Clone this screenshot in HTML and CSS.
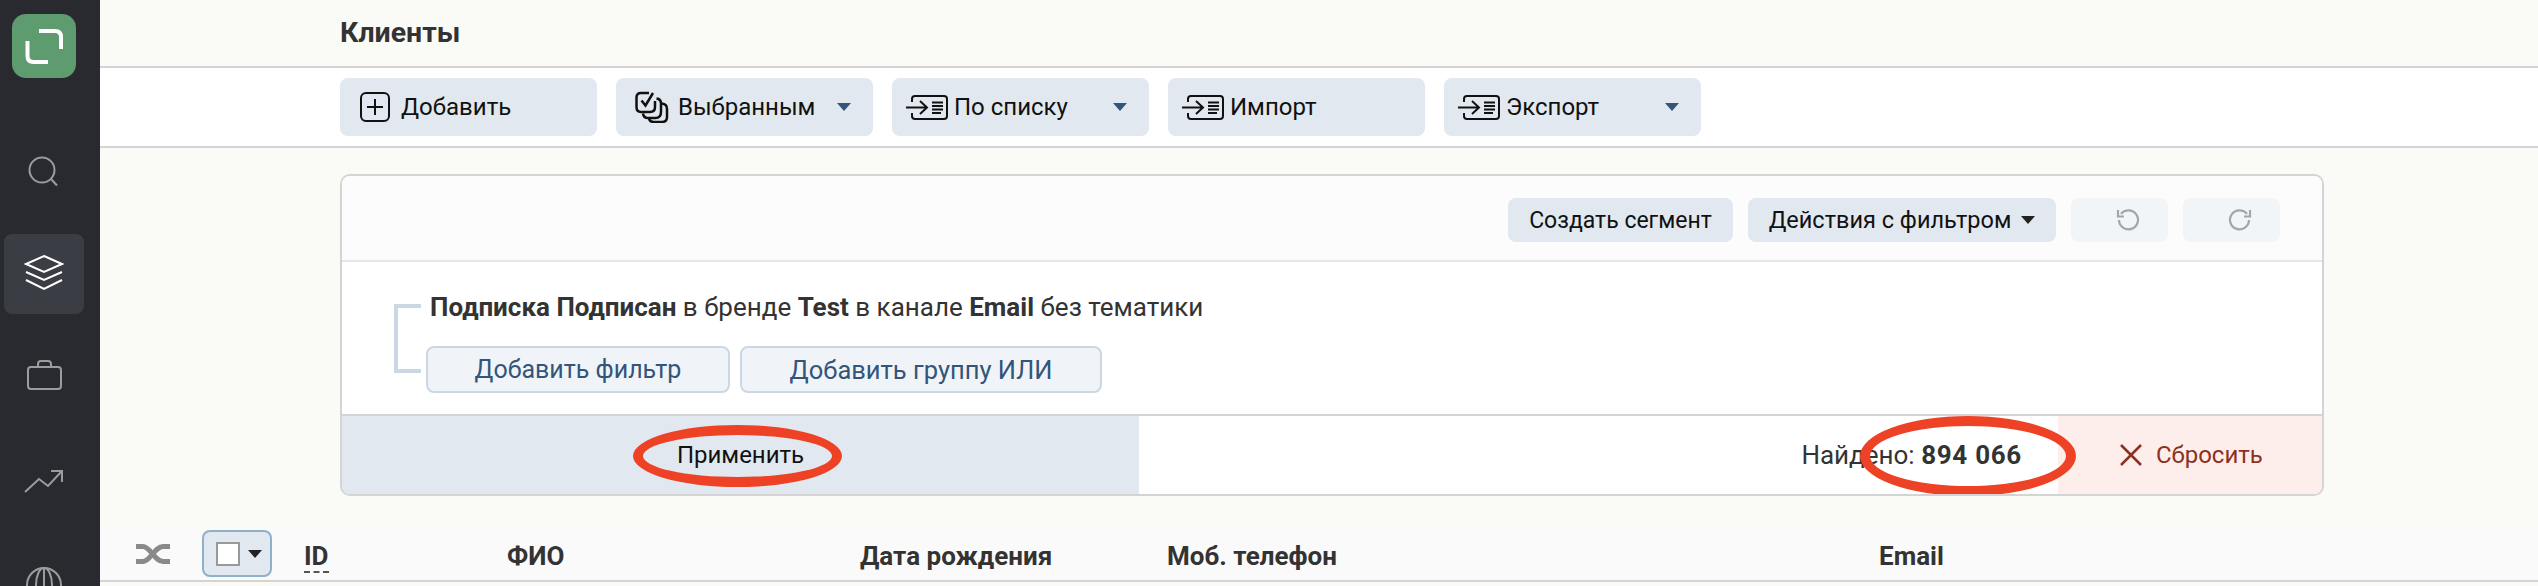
FILE: index.html
```html
<!DOCTYPE html>
<html lang="ru">
<head>
    <meta charset="UTF-8">
    <title>Клиенты</title>
    <link rel="stylesheet" href="styles.css">
</head>
<body>
    <div class="app">
        <aside class="sidebar">
            <div class="logo">
                <svg width="64" height="64" viewBox="0 0 64 64" fill="none" stroke="#fff" stroke-width="4"><path d="M27 17H43Q49 17 49 23V35"/><path d="M15.500 27V42Q15.500 48 21.500 48H36"/></svg>
            </div>
            <nav class="nav">
                <a class="nav-item"><svg width="40" height="40" viewBox="0 0 40 40" fill="none" stroke="#9b9c9f" stroke-width="2"><circle cx="18" cy="18" r="12.500"/><path d="M27 27L33 33.500"/></svg></a>
                <a class="nav-item active"><svg width="40" height="40" viewBox="0 0 40 40" fill="none" stroke="#fff" stroke-width="2"><path d="M20 2L38 10L20 18L2 10Z"/><path d="M2 18L20 26L38 18"/><path d="M2 26L20 35L38 26"/></svg></a>
                <a class="nav-item"><svg width="40" height="40" viewBox="0 0 40 40" fill="none" stroke="#9b9c9f" stroke-width="2"><rect x="4" y="11" width="33" height="22" rx="3"/><path d="M14 11V8Q14 5 17 5H24Q27 5 27 8V11"/></svg></a>
                <a class="nav-item"><svg width="40" height="40" viewBox="0 0 40 40" fill="none" stroke="#9b9c9f" stroke-width="2"><path d="M1 34L15 21L24 28L38 13"/><path d="M27 13H38V24"/></svg></a>
                <a class="nav-item"><svg width="40" height="40" viewBox="0 0 40 40" fill="none" stroke="#9b9c9f" stroke-width="2"><circle cx="20" cy="25" r="17"/><ellipse cx="20" cy="25" rx="8" ry="17"/><path d="M20 8V42"/></svg></a>
            </nav>
        </aside>

        <main class="main">
            <header class="page-header">
                <h1 class="page-title">Клиенты</h1>
            </header>

            <div class="toolbar">
                <button class="tool-btn">
                    <svg class="ico-plus" width="30" height="30" viewBox="0 0 30 30" fill="none" stroke="#111" stroke-width="2"><rect x="1" y="1" width="28" height="28" rx="5"/><path d="M15 7V23M7 15H23"/></svg>
                    <span class="tool-text">Добавить</span>
                </button>
                <button class="tool-btn tool-selected">
                    <svg width="34" height="32" viewBox="0 0 34 32" fill="none" stroke="#111" stroke-width="2.500"><path d="M14 2H6Q1.500 2 1.500 6.500V16Q1.500 21 6 21H15Q20 21 20 16V10"/><path d="M6.500 9.500L10.500 14.500L18 2"/><path d="M21.500 7.500Q26 8 26 12.500V21Q26 27 20.500 27H13Q8.500 27 8 22.500"/><path d="M27 12.500Q32 13 32 18V26Q32 31 27 31H19Q14.500 31 14 27"/></svg>
                    <span class="tool-text">Выбранным</span>
                    <span class="caret"></span>
                </button>
                <button class="tool-btn tool-list">
                    <svg width="42" height="25" viewBox="0 0 42 25" fill="none" stroke="#111" stroke-width="2"><path d="M6 7V4Q6 1 9 1H38Q41 1 41 4V21Q41 24 38 24H9Q6 24 6 21V18"/><path d="M0 12.500H20M14 6L21 12.500L14 19"/><path d="M26 7.500H37M26 11H37M26 14.500H37M26 18H35"/></svg>
                    <span class="tool-text">По списку</span>
                    <span class="caret"></span>
                </button>
                <button class="tool-btn tool-list">
                    <svg width="42" height="25" viewBox="0 0 42 25" fill="none" stroke="#111" stroke-width="2"><path d="M6 7V4Q6 1 9 1H38Q41 1 41 4V21Q41 24 38 24H9Q6 24 6 21V18"/><path d="M0 12.500H20M14 6L21 12.500L14 19"/><path d="M26 7.500H37M26 11H37M26 14.500H37M26 18H35"/></svg>
                    <span class="tool-text">Импорт</span>
                </button>
                <button class="tool-btn tool-list">
                    <svg width="42" height="25" viewBox="0 0 42 25" fill="none" stroke="#111" stroke-width="2"><path d="M6 7V4Q6 1 9 1H38Q41 1 41 4V21Q41 24 38 24H9Q6 24 6 21V18"/><path d="M0 12.500H20M14 6L21 12.500L14 19"/><path d="M26 7.500H37M26 11H37M26 14.500H37M26 18H35"/></svg>
                    <span class="tool-text">Экспорт</span>
                    <span class="caret"></span>
                </button>
            </div>

            <section class="filter">
                <div class="filter-head">
                    <button class="head-btn btn-segment">Создать сегмент</button>
                    <button class="head-btn btn-actions">Действия с фильтром <span class="caret caret-dark"></span></button>
                    <button class="head-btn btn-history">
                        <svg width="24" height="22" viewBox="0 0 24 22" fill="none" stroke="#a3a6a8" stroke-width="2.200"><path d="M5 5A9.500 9.500 0 1 1 3 11"/><path d="M2 1V7.500H8"/></svg>
                    </button>
                    <button class="head-btn btn-history">
                        <svg width="24" height="22" viewBox="0 0 24 22" fill="none" stroke="#a3a6a8" stroke-width="2.200"><path d="M19 5A9.500 9.500 0 1 0 21 11"/><path d="M22 1V7.500H16"/></svg>
                    </button>
                </div>

                <div class="filter-body">
                    <div class="bracket"></div>
                    <div class="rule">
                        <p class="rule-text"><b>Подписка Подписан</b> в бренде <b>Test</b> в канале <b>Email</b> без тематики</p>
                        <div class="rule-actions">
                            <button class="add-btn add-filter">Добавить фильтр</button>
                            <button class="add-btn add-group">Добавить группу ИЛИ</button>
                        </div>
                    </div>
                </div>

                <div class="filter-foot">
                    <button class="apply-btn">
                        <span class="marked">Применить<span class="oval oval-apply"></span></span>
                    </button>
                    <div class="found">Найдено: <b class="marked found-num">894 066<span class="oval oval-found"></span></b></div>
                    <button class="reset-btn">
                        <svg width="22" height="22" viewBox="0 0 22 22" fill="none" stroke="#8e2f20" stroke-width="2.500"><path d="M1 1L21 21M21 1L1 21"/></svg>
                        Сбросить
                    </button>
                </div>
            </section>

            <div class="table-head">
                <svg width="34" height="22" viewBox="0 0 34 22" fill="none" stroke="#8a8a8a" stroke-width="5"><path d="M0 3.500H7C14 3.500 19 18.500 27 18.500H34"/><path d="M0 18.500H7C14 18.500 19 3.500 27 3.500H34"/></svg>
                <div class="check-btn"><span class="check-box"></span><span class="caret caret-dark"></span></div>
                <div class="col col-id"><span>ID</span></div>
                <div class="col">ФИО</div>
                <div class="col">Дата рождения</div>
                <div class="col">Моб. телефон</div>
                <div class="col">Email</div>
            </div>
        </main>
    </div>
</body>
</html>
```

FILE: styles.css
```css
html, body {
    margin: 0;
    height: 586px;
    overflow: hidden;
    background: #fafbf6;
}
body {
    font-family: Roboto, "Noto Sans", sans-serif;
    font-size: 24px;
    color: #333;
}
button {
    font: inherit;
    border: 0;
    padding: 0;
    cursor: pointer;
}
.app {
    display: flex;
    height: 586px;
}

/* sidebar */
.sidebar {
    width: 100px;
    flex: none;
    background: #282a2f;
    overflow: hidden;
}
.logo {
    width: 64px;
    height: 64px;
    margin: 14px 0 0 12px;
    background: #5e9b6f;
    border-radius: 14px;
}
.logo svg {
    display: block;
}
.nav {
    display: flex;
    flex-direction: column;
    gap: 22px;
    margin: 54px 0 0 4px;
}
.nav-item {
    display: flex;
    flex: none;
    align-items: center;
    justify-content: center;
    width: 80px;
    height: 80px;
    border-radius: 8px;
}
.nav-item.active {
    background: #3a3d43;
}

/* header + toolbar */
.main {
    flex: 1;
    min-width: 0;
}
.page-header {
    height: 66px;
    padding-left: 240px;
    border-bottom: 2px solid #d4d4d4;
}
.page-title {
    margin: 0;
    font-size: 28.5px;
    font-weight: 700;
    line-height: 66px;
    color: #333;
}
.toolbar {
    display: flex;
    gap: 19px;
    height: 58px;
    padding: 10px 0 10px 240px;
    background: #fff;
    border-bottom: 2px solid #d4d4d4;
}
.tool-btn {
    display: flex;
    align-items: center;
    width: 257px;
    height: 58px;
    padding-left: 20px;
    gap: 11px;
    box-sizing: border-box;
    background: #e2e8ef;
    border-radius: 8px;
    color: #111;
}
.tool-selected {
    padding-left: 19px;
    gap: 9px;
}
.tool-list {
    padding-left: 14px;
    gap: 6px;
}
.caret {
    width: 0;
    height: 0;
    margin-left: auto;
    margin-right: 22px;
    border-left: 7px solid transparent;
    border-right: 7px solid transparent;
    border-top: 8px solid #33557a;
}

/* filter panel */
.filter {
    width: 1984px;
    box-sizing: border-box;
    margin: 26px 0 0 240px;
    background: #fff;
    border: 2px solid #d4d4d4;
    border-radius: 10px;
    overflow: hidden;
}
.filter-head {
    display: flex;
    justify-content: flex-end;
    gap: 15px;
    height: 62px;
    padding: 22px 42px 0 0;
    background: #fcfcfc;
    border-bottom: 2px solid #e2e8ee;
}
.head-btn {
    height: 44px;
    box-sizing: border-box;
    background: #e2e8ef;
    border-radius: 8px;
    color: #111;
}
.btn-segment {
    width: 225px;
    font-size: 23px;
}
.btn-actions {
    display: flex;
    align-items: center;
    justify-content: center;
    gap: 10px;
    width: 308px;
    font-size: 23.500px;
}
.btn-actions .caret {
    margin: 0;
}
.btn-history {
    display: flex;
    align-items: center;
    justify-content: center;
    width: 97px;
    padding-left: 16px;
    background: #f2f5f7;
}
.caret-dark {
    border-top-color: #222;
}
.filter-body {
    display: flex;
    align-items: flex-start;
    height: 152px;
}
.bracket {
    width: 27px;
    height: 69px;
    margin: 42px 0 0 52px;
    box-sizing: border-box;
    border: 4px solid #cbd8e4;
    border-right: 0;
}
.rule {
    margin-left: 5px;
}
.rule-text {
    margin: 31px 0 0 4px;
    font-size: 26px;
    line-height: 28px;
    color: #333;
}
.rule-actions {
    display: flex;
    gap: 10px;
    margin-top: 25px;
}
.add-btn {
    height: 47px;
    background: #f0f4f8;
    border: 2px solid #cbd8e4;
    border-radius: 8px;
    color: #33557a;
    font-size: 25px;
}
.add-filter {
    width: 304px;
}
.add-group {
    width: 362px;
    font-size: 25.500px;
}
.filter-foot {
    display: flex;
    height: 78px;
    border-top: 2px solid #d4d4d4;
}
.apply-btn {
    width: 797px;
    background: #e2e8ef;
    color: #111;
}
.found {
    flex: 1;
    align-self: center;
    padding-right: 36px;
    text-align: right;
    font-size: 26px;
    color: #333;
}
.found-num {
    letter-spacing: 0.7px;
}
.marked {
    position: relative;
}
.oval {
    position: absolute;
    box-sizing: border-box;
    border: 10px solid #ee4226;
    border-radius: 50%;
}
.oval-apply {
    left: -44px;
    top: -16px;
    width: 209px;
    height: 62px;
}
.oval-found {
    left: -61px;
    top: -24px;
    width: 216px;
    height: 80px;
}
.reset-btn {
    display: flex;
    align-items: center;
    gap: 14px;
    width: 264px;
    padding-left: 62px;
    box-sizing: border-box;
    background: #fdeeeb;
    color: #8e3022;
}

/* table header */
.table-head {
    display: grid;
    grid-template-columns: 66px 102px 203px 353px 307px 712px auto;
    align-items: center;
    height: 53px;
    margin-top: 24px;
    padding: 7px 0 0 36px;
    background: linear-gradient(#fafbf6, #fafafa 12px);
    border-bottom: 2px solid #d4d4d4;
}
.table-head svg {
    display: block;
}
.check-btn {
    display: flex;
    align-items: center;
    justify-content: space-between;
    width: 70px;
    height: 47px;
    padding: 0 8px 0 12px;
    box-sizing: border-box;
    background: #e2e8ef;
    border: 2px solid #8fb0cb;
    border-radius: 8px;
}
.check-box {
    width: 24px;
    height: 24px;
    box-sizing: border-box;
    background: #fff;
    border: 2px solid #999;
}
.check-btn .caret {
    margin: 0;
}
.col {
    font-size: 26px;
    font-weight: 700;
    color: #333;
    padding-top: 5px;
}
.col-id span {
    border-bottom: 2px dashed #555;
}
```
